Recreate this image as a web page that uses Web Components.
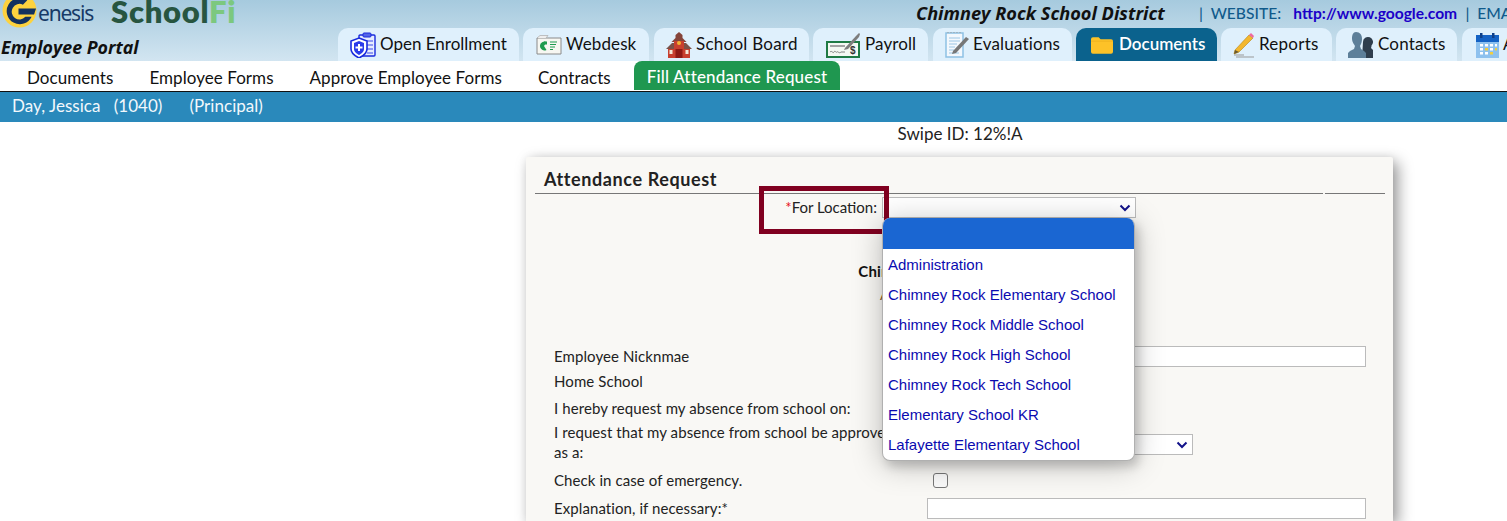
<!DOCTYPE html>
<html><head><meta charset="utf-8"><style>
html,body{margin:0;padding:0;height:521px;overflow:hidden;background:#fff;font-family:Lato,"Noto Sans",sans-serif;font-size:16px;color:#111}
</style></head><body>
<portal-header></portal-header>
<sub-nav></sub-nav>
<user-bar></user-bar>
<swipe-line></swipe-line>
<attendance-card></attendance-card>
<script>
const ICONS={
enroll:`<svg width="26" height="26" viewBox="0 0 26 26"><rect x="9" y="3" width="16" height="21" rx="1" fill="#e6ecff" stroke="#1a2bdc" stroke-width="1.4"/><rect x="13" y="1" width="8" height="4" rx="1" fill="#5566e8" stroke="#1a2bdc"/><path d="M15 9h8M17 13h6M17 17h6M17 21h6" stroke="#3a4be8"/><path d="M9 6l8 3v8c0 4-4 7-8 9-4-2-8-5-8-9V9z" fill="#fff" stroke="#1a2bdc" stroke-width="1.6"/><path d="M9 9l5 2v6c0 3-2.500 4.500-5 6-2.500-1.500-5-3-5-6v-6z" fill="#2a3bea"/><path d="M9 12v7M5.500 15.500h7" stroke="#fff" stroke-width="2"/></svg>`,
webdesk:`<svg width="26" height="20" viewBox="0 0 26 20"><path d="M1 3h24v16H1z" fill="#f7f7f2" stroke="#8a8a8a"/><path d="M1 3l3-2.500h8L10 3" fill="#eee" stroke="#aaa" stroke-width=".7"/><path d="M10.500 7a4.500 4.500 0 1 0 0 8L8 11z" fill="#1f9b4e"/><path d="M8 6.500h3v3H8z" fill="#1f9b4e"/><path d="M14 7h7M14 9.500h6M14 12h5M14 14.500h3" stroke="#1f9b4e" stroke-width="1.200"/></svg>`,
school:`<svg width="26" height="26" viewBox="0 0 26 26"><path d="M13 0l3.500 3v3l4 4H5.500l4-4V3z" fill="#85443a"/><path d="M0 17l6-6h14l6 6z" fill="#7b5148"/><path d="M2 17h22v9H2z" fill="#c8402f"/><path d="M8 9h10v17H8z" fill="#c8402f"/><circle cx="13" cy="11" r="2" fill="#f3b233"/><path d="M9.500 17h7v9h-7z" fill="#8e1a14"/><path d="M3.500 18h3v4h-3zM19.500 18h3v4h-3z" fill="#f3e9d8"/></svg>`,
payroll:`<svg width="35" height="26" viewBox="0 0 35 26"><rect x="1" y="10" width="32" height="15" fill="#f4f8f2" stroke="#1f7a44" stroke-width="2"/><path d="M4 13h15v2H4z" fill="#a3a3a3"/><path d="M4 20c2-2 3 2 4 0s2 1 3 0 2 2 4 0h4" fill="none" stroke="#666" stroke-width=".8"/><text x="24" y="22" font-size="10" font-weight="700" font-family="Liberation Sans" fill="#333">$</text><path d="M19 16l11-12 3-3 1 1-1 3-11 12-4 1z" fill="#7d7d7d"/></svg>`,
eval:`<svg width="25" height="27" viewBox="0 0 25 27"><rect x="1" y="2" width="17" height="24" fill="#f3f8fd" stroke="#8ec1e4" stroke-width="1.500"/><path d="M3 2v-1M6 2v-1M9 2v-1M12 2v-1M15 2v-1" stroke="#999"/><path d="M4 7h11M4 10h11M4 13h8M4 16h6M4 19h5M4 22h10" stroke="#9cc6e4"/><path d="M8 20l13-14 3 2-13 14-4 1z" fill="#777"/></svg>`,
folder:`<svg width="22" height="17" viewBox="0 0 23 17"><path d="M2 0h6l2 2h11a2 2 0 0 1 2 2v11a2 2 0 0 1-2 2H2a2 2 0 0 1-2-2V2a2 2 0 0 1 2-2z" fill="#fdc228"/><path d="M0 4h23" stroke="#e7a91a" stroke-width=".6"/></svg>`,
reports:`<svg width="22" height="26" viewBox="0 0 22 26"><path d="M2 18L16 3l4 3L6 20l-5 2z" fill="#f3b72e" stroke="#b78410" stroke-width=".6"/><path d="M16 3l2-2 3 3-1 2z" fill="#ee6aa0"/><path d="M2 18l4 2-5 2z" fill="#6a5a30"/><path d="M1 23h10M3 25h18" stroke="#999"/></svg>`,
contacts:`<svg width="25" height="26" viewBox="0 0 25 26"><path d="M15 10a5 5 0 1 1 8.500 3.500c0 1.500-.5 2.500-.5 2.500l2 2v8H14z" fill="#2f3e4d"/><path d="M8 0c4 0 6 3 6 7 0 3-1 5-2 7l1 3 3 2 2 2v5H0v-5l2-2 4-2 1-3c-1-2-3-4-3-7 0-4 1-7 4-7z" fill="#5d7f99"/></svg>`,
cal:`<svg width="24" height="26" viewBox="0 0 24 26"><rect x="1" y="3" width="23" height="23" fill="#8ec1ee"/><rect x="1" y="3" width="23" height="7" fill="#1462c4"/><rect x="5" y="1" width="2.500" height="5" fill="#0e3f88"/><rect x="17" y="1" width="2.500" height="5" fill="#0e3f88"/><g fill="#fff"><rect x="5" y="12" width="3" height="2.500"/><rect x="10" y="12" width="3" height="2.500"/><rect x="15" y="12" width="3" height="2.500"/><rect x="20" y="12" width="2" height="2.500"/><rect x="5" y="16" width="3" height="2.500"/><rect x="15" y="16" width="3" height="2.500"/><rect x="5" y="20" width="3" height="2.500"/><rect x="10" y="20" width="3" height="2.500"/></g><g fill="#f2cf3f"><rect x="10" y="16" width="3" height="2.500"/><rect x="20" y="16" width="2" height="2.500"/><rect x="15" y="20" width="3" height="2.500"/></g></svg>`
};
const def=(n,html,extra)=>customElements.define(n,class extends HTMLElement{constructor(){super();this.attachShadow({mode:'open'}).innerHTML=html;extra&&extra(this)}});

def('nav-tab',`<style>:host{display:flex;flex:none;align-items:center;width:var(--tw);height:33px;box-sizing:border-box;background:#dff0fc;border-radius:10px 10px 0 0;font-size:17px;color:#111;white-space:nowrap}
:host([active]){background:#0b628d;color:#fff;font-weight:600}
#i{display:flex;align-items:flex-end;height:33px;width:var(--to);padding-left:var(--il);box-sizing:border-box;flex:none;padding-bottom:var(--ib,3px)}
#t{padding-bottom:2px}</style><span id="i"></span><span id="t"><slot></slot></span>`,el=>{queueMicrotask(()=>{el.shadowRoot.getElementById('i').innerHTML=ICONS[el.getAttribute('icon')]||''})});

def('portal-header',`<style>:host{display:block;height:61px;overflow:hidden;background:linear-gradient(#a6cade,#d2e5f1)}
.top{display:flex;height:28px;align-items:flex-start}
.logo{display:flex;align-items:flex-start;width:337px;flex:none;height:28px}
.g{width:35px;height:35px;margin:-7px 0 0 2px;flex:none}
.enesis{font:400 21px/24px "Noto Sans",sans-serif;color:#173a67;margin:1px 0 0 1px;letter-spacing:-1.200px}
.sf{font:800 31px/22px Lato,sans-serif;color:#275540;margin:0 0 0 18px;letter-spacing:.7px}.sf b{color:#7cc87f;font-weight:800}
.dist{margin-left:auto;display:flex;align-items:center;white-space:nowrap;height:26px;width:591px;flex:none;overflow:hidden}
.dist i{font:italic 700 18.200px "Open Sans",sans-serif;color:#111;width:283px;flex:none}
.dist span{color:#105a8b;font-weight:500;font-size:15.600px}
.dist a{color:#1a00c8;font-weight:700;text-decoration:none;font-size:15.600px}
.bot{display:flex;height:33px;align-items:flex-end}
.portal{width:338px;flex:none;font:italic 700 17.800px/24px "Open Sans",sans-serif;color:#111;height:26px;padding-left:1px;box-sizing:border-box;white-space:nowrap}
.tabs{display:flex;gap:4px}
</style>
<div class="top"><div class="logo">
<svg class="g" viewBox="0 0 36 36"><circle cx="18" cy="18" r="17.500" fill="#fdd23e"/><path d="M26 7.500a13.500 13.500 0 1 0 4.500 17l-6.500 0a8 8 0 1 1-2.500-12.500z" fill="#13315f"/><path d="M17 16h18l-2 6H17z" fill="#13315f"/></svg>
<span class="enesis">enesis</span><span class="sf">School<b>Fi</b></span></div>
<div class="dist"><i>Chimney Rock School District</i><span>|&nbsp; WEBSITE:</span>&nbsp;&nbsp;&nbsp;<a>http://www.google.com</a>&nbsp;&nbsp;<span>|&nbsp; EMAIL:</span></div></div>
<div class="bot"><div class="portal">Employee Portal</div><div class="tabs">
<nav-tab icon="enroll" style="--tw:181px;--to:42px;--il:12px;margin-right:0">Open Enrollment</nav-tab>
<nav-tab icon="webdesk" style="--tw:126px;--to:43px;--il:13px;--ib:6px;letter-spacing:.1px">Webdesk</nav-tab>
<nav-tab icon="school" style="--tw:155px;--to:42px;--il:12px;margin-left:1px;letter-spacing:.25px">School Board</nav-tab>
<nav-tab icon="payroll" style="--tw:115px;--to:52px;--il:13px;letter-spacing:.1px">Payroll</nav-tab>
<nav-tab icon="eval" style="--tw:139px;--to:40px;--il:12px;margin-left:1px;letter-spacing:.2px">Evaluations</nav-tab>
<nav-tab icon="folder" active style="--tw:141px;--to:43px;--il:15px;--ib:7px">Documents</nav-tab>
<nav-tab icon="reports" style="--tw:111px;--to:38px;--il:12px;letter-spacing:.25px">Reports</nav-tab>
<nav-tab icon="contacts" style="--tw:121px;--to:42px;--il:12px;letter-spacing:.15px">Contacts</nav-tab>
<nav-tab icon="cal" style="--tw:130px;--to:41px;--il:13px;margin-left:1px">Attendance</nav-tab>
</div></div>`);

def('sub-nav',`<style>:host{display:flex;height:30px;background:#fff;border-bottom:1px solid #111;align-items:stretch;padding-left:14px;font-size:17px;color:#111;letter-spacing:.06px}
span{display:flex;align-items:center;padding:2px 13px 0;margin-right:10px;white-space:nowrap}
.on{background:#1f9750;color:#fff;font-weight:500;border-radius:8px 8px 0 0;height:27px;letter-spacing:.15px}</style>
<span>Documents</span><span>Employee Forms</span><span>Approve Employee Forms</span><span>Contracts</span><span class="on">Fill Attendance Request</span>`);

def('user-bar',`<style>:host{display:flex;height:30px;box-sizing:border-box;padding:0 0 3px 12px;align-items:center;background:#2a89bb;color:#f2f8fc;font-size:17px;gap:27px;white-space:pre;letter-spacing:.04px}</style><span>Day, Jessica   (1040)</span><span>(Principal)</span>`);

def('swipe-line',`<style>:host{display:block;height:35px;padding:1px 0 0 413px;box-sizing:border-box;text-align:center;font-size:17px;line-height:22px;width:1507px;color:#222}</style>Swipe ID: 12%!A`);

def('form-row',`<style>:host{display:grid;grid-template-columns:373px 439px;align-items:center;font-size:15px;color:#222;padding-left:28px;line-height:20px;letter-spacing:.08px}
.l{padding-bottom:2px}
.v{display:flex;align-items:center}</style><div class="l"><slot name="label"></slot></div><div class="v"><slot></slot></div>`);

def('attendance-card',`<style>:host{display:block;position:relative;margin-left:526px;width:867px;height:364px;background:#f9f8f5;box-shadow:5px 5px 15px rgba(0,0,0,.4),0 0 8px rgba(0,0,0,.06);border-radius:2px 2px 0 0;color:#222}
.t{font-weight:700;font-size:18px;letter-spacing:.6px;margin:0 8px 0 9px;padding:11px 0 0 9px;line-height:23px;height:37px;box-sizing:border-box;border-bottom:1px solid #777;position:relative}
.t:after{content:"";position:absolute;right:60px;bottom:-1px;width:2px;height:1px;background:#f9f8f5}
.loc{display:flex;height:21px;margin-top:3px;align-items:center;font-size:15px}
.loc label{width:356px;text-align:right;padding:0 5px 2px 0;box-sizing:border-box;white-space:nowrap}
.loc em{font-style:normal;color:#e8101a}
.sel{width:254px;height:21px;border:1px solid #bbb;background:#fff;box-sizing:border-box;display:flex;justify-content:flex-end;align-items:center;padding-right:4px}
.c{text-align:center;font-weight:700;font-size:15px;letter-spacing:.2px;height:22px;line-height:22px;margin-top:42px;color:#111}
.c2{text-align:center;font-size:14px;height:22px;line-height:22px;margin-top:2px;color:#8a5a1a}
.rows{margin-top:40px;display:flex;flex-direction:column}
input{all:unset;display:block;box-sizing:border-box;width:439px;height:21px;background:#fff;border:1px solid #bbb;margin-bottom:1px}
.s2{width:266px;height:21px;border:1px solid #bbb;background:#fff;box-sizing:border-box;display:flex;justify-content:flex-end;align-items:center;padding-right:4px;margin-top:3px}
.cb{width:15px;height:15px;border:1.500px solid #777;border-radius:3px;background:#fafafa;box-sizing:border-box;margin:0 0 2px 6px}
select-pop{position:absolute;left:356px;top:61px}
.mark{position:absolute;left:233px;top:29px;width:130px;height:48px;border:5px solid #800020;box-sizing:border-box}
svg{display:block}
</style>
<div class="t">Attendance Request</div>
<div class="loc"><label><em>*</em>For Location:</label><div class="sel"><svg width="12" height="8" viewBox="0 0 12 8"><path d="M1.500 1.500L6 6l4.500-4.500" fill="none" stroke="#13138a" stroke-width="2"/></svg></div></div>
<div class="c">Chimney Rock School District</div>
<div class="c2">Attendance Request Form</div>
<div class="rows">
<form-row style="height:22px"><span slot="label">Employee Nicknmae</span><input></form-row>
<form-row style="height:28px"><span slot="label">Home School</span></form-row>
<form-row style="height:26px"><span slot="label">I hereby request my absence from school on:</span></form-row>
<form-row style="height:42px"><span slot="label">I request that my absence from school be approved<br>as a:</span><div class="s2"><svg width="12" height="8" viewBox="0 0 12 8"><path d="M1.500 1.500L6 6l4.500-4.500" fill="none" stroke="#13138a" stroke-width="2"/></svg></div></form-row>
<form-row style="height:34px"><span slot="label">Check in case of emergency.</span><div class="cb"></div></form-row>
<form-row style="height:22px"><span slot="label">Explanation, if necessary:*</span><input></form-row>
</div>
<div class="mark"></div>
<select-pop></select-pop>`);

def('select-pop',`<style>:host{display:block;width:253px;height:243px;background:#fff;border:1px solid #b0b0b0;border-top:none;box-sizing:border-box;border-radius:8px;box-shadow:0 4px 30px rgba(0,0,0,.25),4px 6px 10px rgba(0,0,0,.15);overflow:hidden;font:15px "Liberation Sans",sans-serif;color:#0a0ab0}
div{height:30px;line-height:32px;padding-left:5px;white-space:nowrap}
.h{background:#1a66d2;height:31px}</style>
<div class="h"></div><div>Administration</div><div>Chimney Rock Elementary School</div><div>Chimney Rock Middle School</div><div>Chimney Rock High School</div><div>Chimney Rock Tech School</div><div>Elementary School KR</div><div>Lafayette Elementary School</div>`);
</script>
</body></html>
